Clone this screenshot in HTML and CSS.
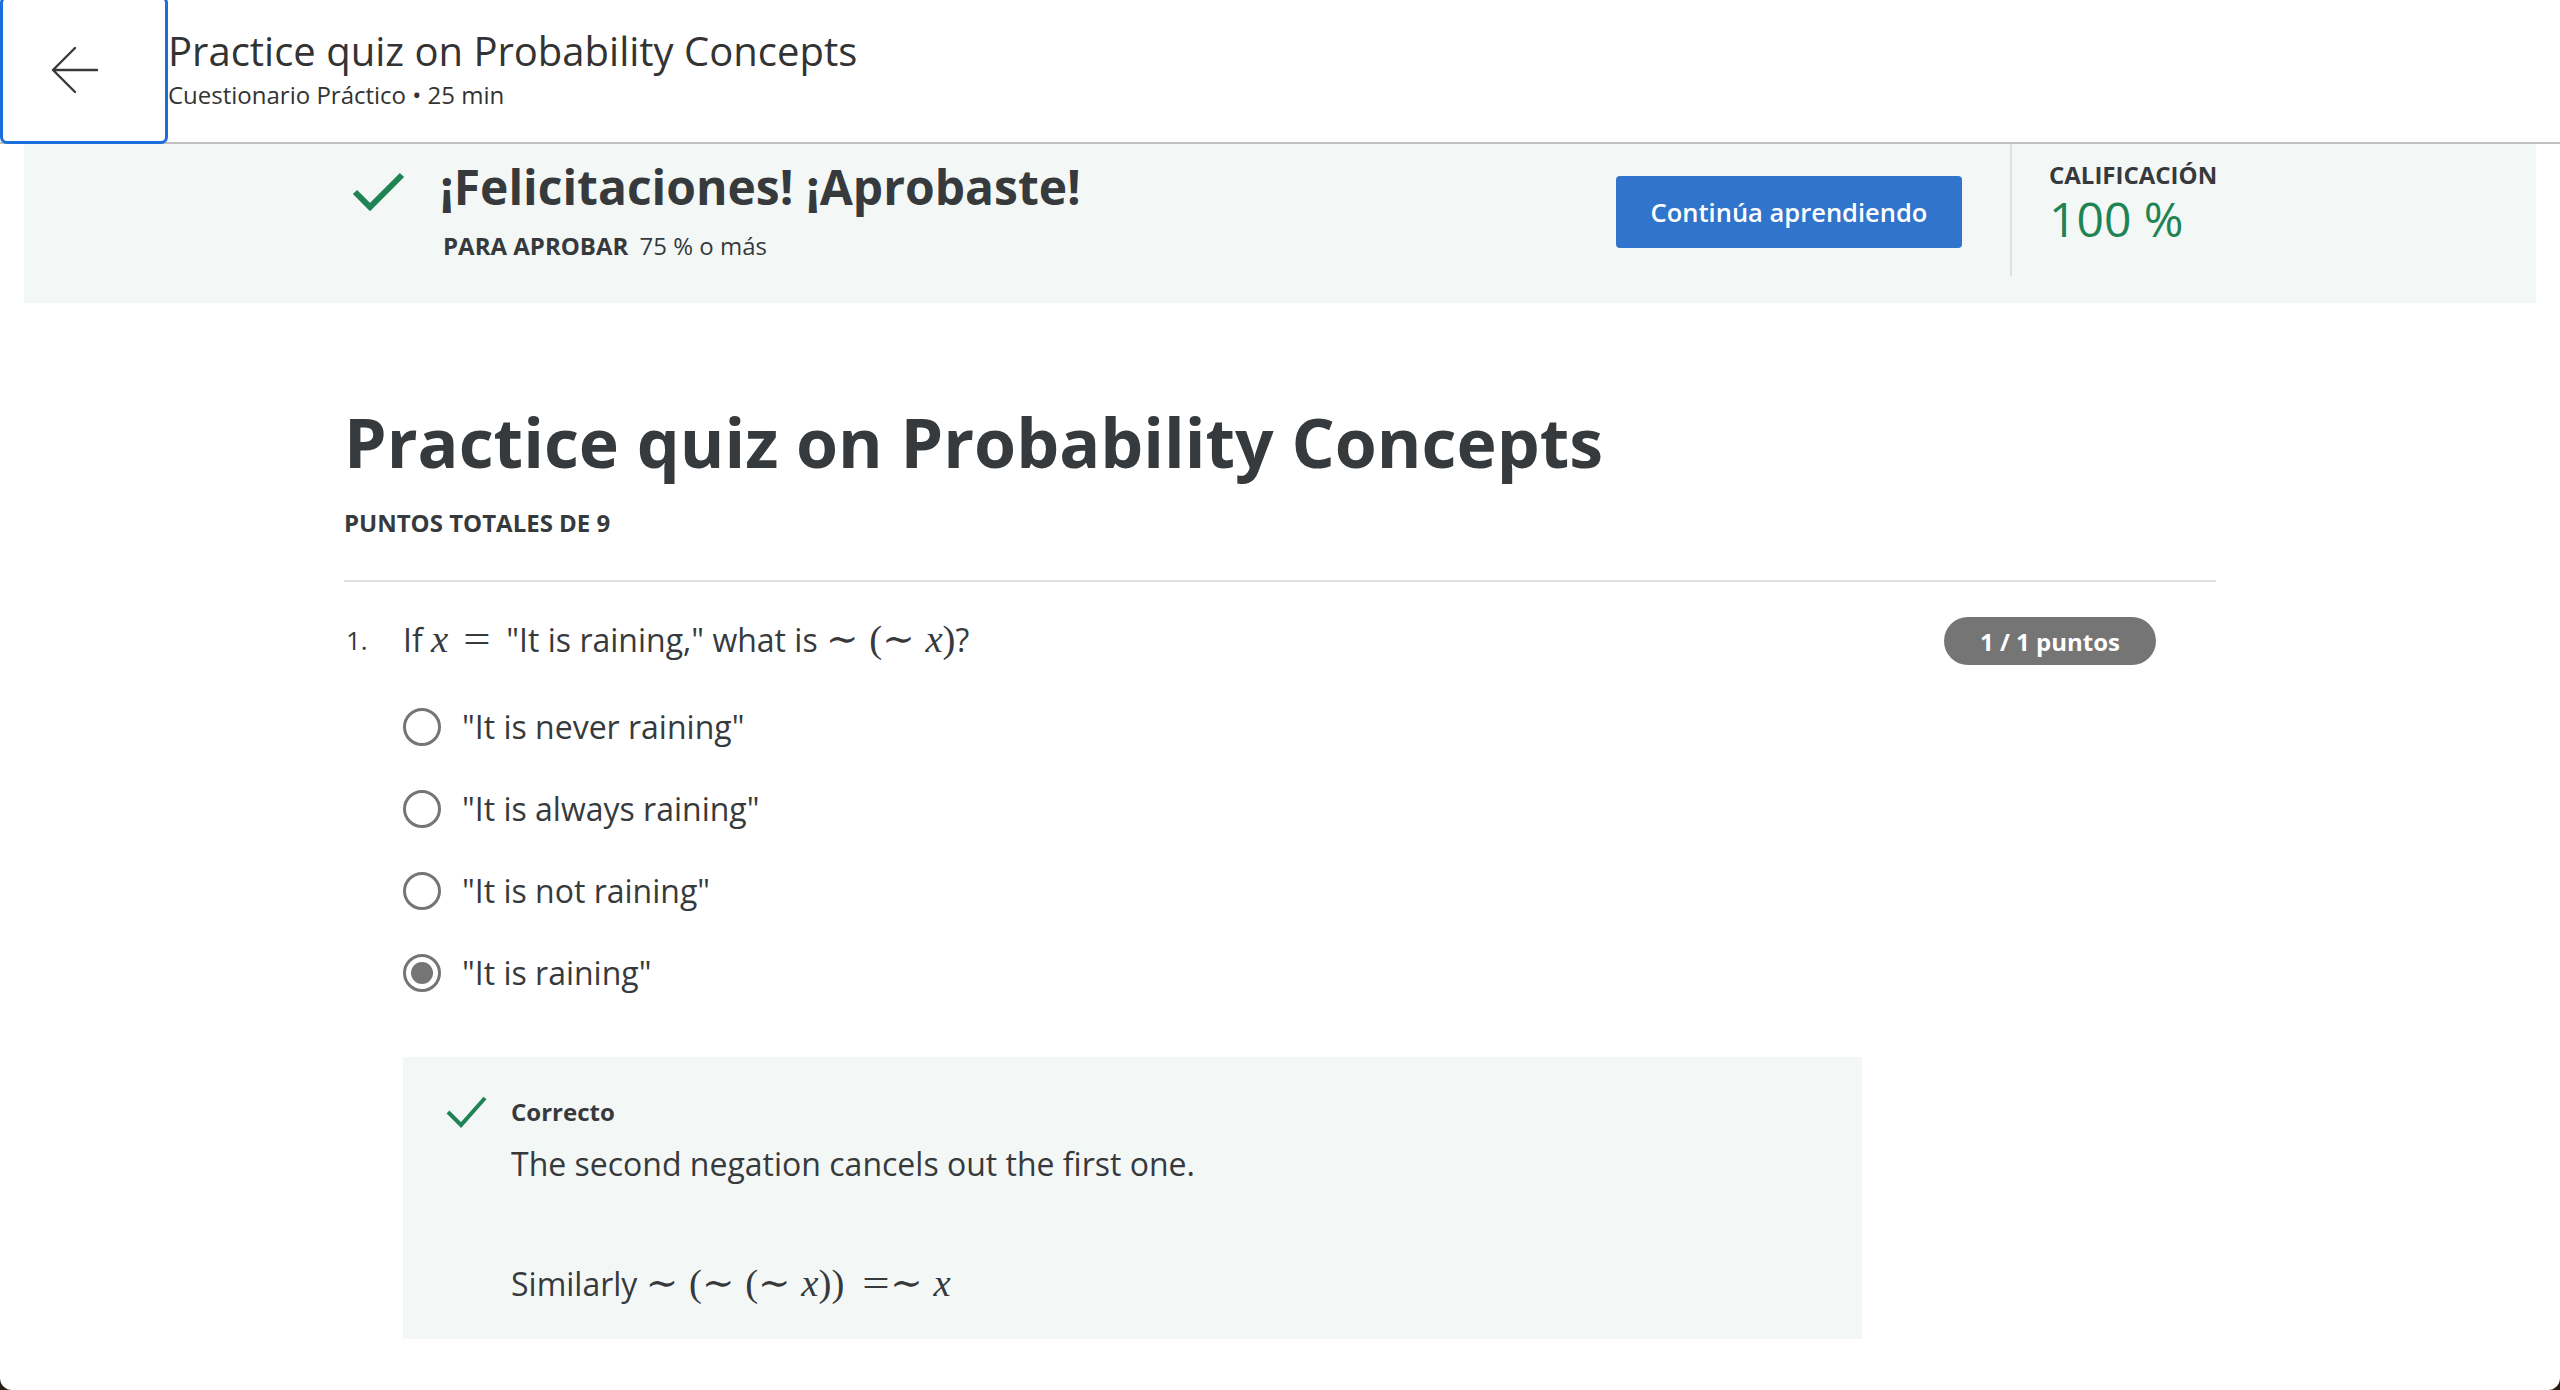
FILE: index.html
```html
<!DOCTYPE html>
<html lang="es">
<head>
<meta charset="utf-8">
<title>Practice quiz on Probability Concepts</title>
<link rel="stylesheet" href="styles.css">
</head>
<body>
<header class="topbar">
  <button class="back" aria-label="Volver">
    <svg width="48" height="48" viewBox="0 0 48 48"><path d="M46 24H2M24 2L2 24L24 46" fill="none" stroke="#373a3c" stroke-width="2.4" stroke-linecap="round" stroke-linejoin="round"/></svg>
  </button>
  <div class="topbar-text">
    <div class="topbar-title">Practice quiz on Probability Concepts</div>
    <div class="topbar-sub">Cuestionario Práctico • 25 min</div>
  </div>
</header>

<section class="banner">
  <div class="banner-inner">
    <svg class="banner-check" width="56" height="44" viewBox="0 0 56 44"><path d="M5 22L20 37L52 5" fill="none" stroke="#1f8354" stroke-width="6"/></svg>
    <div class="banner-text">
      <h2 class="banner-title">¡Felicitaciones! ¡Aprobaste!</h2>
      <p class="banner-pass"><strong>PARA APROBAR</strong> 75 % o más</p>
    </div>
    <button class="cta">Continúa aprendiendo</button>
    <div class="grade">
      <div class="grade-label">CALIFICACIÓN</div>
      <div class="grade-value">100 %</div>
    </div>
  </div>
</section>

<main class="content">
  <h1 class="quiz-title">Practice quiz on Probability Concepts</h1>
  <div class="total">PUNTOS TOTALES DE 9</div>
  <hr class="rule">
  <div class="question">
    <div class="qnum">1.</div>
    <div class="qbody">
      <div class="qhead">
        <div class="qtext">If <span class="m"><i>x</i><span class="rel">=</span></span> "It is raining," what is <span class="m"><span class="op">∼</span>(<span class="op op-tight">∼</span><i>x</i>)</span>?</div>
        <div class="pill">1 / 1 puntos</div>
      </div>
      <ul class="options">
        <li class="option"><span class="radio"></span><span class="opt-text">"It is never raining"</span></li>
        <li class="option"><span class="radio"></span><span class="opt-text">"It is always raining"</span></li>
        <li class="option"><span class="radio"></span><span class="opt-text">"It is not raining"</span></li>
        <li class="option"><span class="radio radio-on"></span><span class="opt-text">"It is raining"</span></li>
      </ul>
      <div class="feedback">
        <div class="fb-head">
          <svg class="fb-check" width="44" height="36" viewBox="0 0 44 36"><path d="M4 18L17 31L41 4" fill="none" stroke="#1f8354" stroke-width="4"/></svg>
          <span class="fb-label">Correcto</span>
        </div>
        <p class="fb-text">The second negation cancels out the first one.</p>
        <p class="fb-text fb-math">Similarly <span class="m"><span class="op">∼</span>(<span class="op op-tight">∼</span>(<span class="op op-tight">∼</span><i>x</i>))<span class="rel rel-wide">=</span><span class="op op-tight">∼</span><i>x</i></span></p>
      </div>
    </div>
  </div>
</main>
</body>
</html>
```
FILE: styles.css
```css
* { box-sizing: border-box; }

html { background: #2a1c14; }

body {
  margin: 0;
  height: 1390px;
  overflow: hidden;
  background: #fff;
  border-radius: 0 0 12px 12px;
  font-family: "Open Sans", "Noto Sans", sans-serif;
  color: #373a3c;
}

/* top bar */
.topbar {
  display: flex;
  align-items: flex-start;
  height: 144px;
  border-bottom: 2px solid #c1c1c1;
}

.back {
  flex: none;
  width: 168px;
  height: 148px;
  margin-top: -4px;
  border: 3px solid #1b6fdc;
  border-radius: 7px;
  background: #fff;
  display: flex;
  align-items: center;
  padding: 0 0 0 48px;
  position: relative;
  z-index: 1;
}

.back svg { display: block; }

.topbar-text { padding-top: 25px; }

.topbar-title {
  font-size: 40px;
  line-height: 52px;
  color: #333;
}

.topbar-sub {
  margin-top: 2px;
  font-size: 24px;
  line-height: 32px;
  color: #333;
}

/* banner */
.banner {
  margin: 0 24px;
  height: 159px;
  background: #f3f8f7;
}

.banner-inner {
  width: 1872px;
  margin: 0 auto;
  height: 100%;
  display: flex;
  align-items: flex-start;
}

.banner-check {
  flex: none;
  margin-left: 6px;
  margin-top: 26px;
}

.banner-text {
  margin-left: 34px;
  padding-top: 15px;
}

.banner-title {
  margin: 0;
  font-size: 48px;
  line-height: 56px;
  font-weight: 700;
}

.banner-pass {
  margin: 15px 0 0 3px;
  font-size: 24px;
  line-height: 32px;
}

.banner-pass strong { font-weight: 700; margin-right: 5px; }

.cta {
  margin-left: auto;
  margin-top: 32px;
  width: 346px;
  height: 72px;
  background: #3074cb;
  color: #fff;
  border: none;
  border-radius: 4px;
  font-family: "Open Sans", sans-serif;
  font-size: 25.5px;
  font-weight: 600;
}

.grade {
  margin-left: 48px;
  width: 206px;
  height: 132px;
  border-left: 2px solid #dedede;
  padding: 15px 0 0 37px;
}

.grade-label {
  font-size: 24px;
  line-height: 32px;
  font-weight: 700;
}

.grade-value {
  font-size: 48px;
  line-height: 56px;
  color: #1f8354;
}

/* content */
.content {
  width: 1872px;
  margin: 0 auto;
  padding-top: 97px;
}

.quiz-title {
  margin: 0;
  font-size: 68px;
  line-height: 84px;
  font-weight: 700;
}

.total {
  margin-top: 23px;
  font-size: 24px;
  line-height: 32px;
  font-weight: 700;
}

.rule {
  margin: 41px 0 0;
  border: 0;
  height: 2px;
  background: #e1e1e1;
}

.question {
  display: flex;
  margin-top: 36px;
}

.qnum {
  flex: none;
  width: 59px;
  padding-left: 2px;
  font-size: 26px;
  line-height: 44px;
}

.qbody { flex: 1; }

.qhead {
  display: flex;
  justify-content: space-between;
  align-items: flex-start;
  padding-right: 60px;
}

.qtext {
  font-size: 32px;
  line-height: 44px;
  height: 44px;
}

.m {
  font-family: "Liberation Serif", "DejaVu Serif", serif;
  font-size: 1.21em;
  line-height: 1;
}

.m i { font-style: italic; }

.rel {
  display: inline-block;
  transform: scaleX(1.25);
  margin: 0 10px 0 18px;
}

.rel-wide { margin: 0 3px 0 21px; }

.op { margin-right: 0.28em; }
.op-tight { margin-right: 0.28em; }

.pill {
  flex: none;
  width: 212px;
  height: 48px;
  margin-top: -1px;
  border-radius: 24px;
  background: #757575;
  color: #fff;
  font-size: 24px;
  font-weight: 700;
  display: flex;
  align-items: center;
  justify-content: center;
}

.options {
  list-style: none;
  margin: 21px 0 0;
  padding: 0;
}

.option {
  display: flex;
  align-items: center;
  height: 82px;
}

.radio {
  flex: none;
  width: 38px;
  height: 38px;
  border: 3px solid #757575;
  border-radius: 50%;
  margin-right: 21px;
  display: flex;
  align-items: center;
  justify-content: center;
}

.radio-on::after {
  content: "";
  width: 22px;
  height: 22px;
  border-radius: 50%;
  background: #757575;
}

.opt-text {
  font-size: 32px;
  line-height: 44px;
}

.feedback {
  margin-top: 43px;
  width: 1459px;
  background: #f3f8f7;
  padding: 37px 0 33px 41px;
}

.fb-head {
  display: flex;
  align-items: flex-start;
}

.fb-check { flex: none; }

.fb-label {
  margin-left: 23px;
  margin-top: 3px;
  font-size: 24px;
  line-height: 30px;
  font-weight: 700;
}

.fb-text {
  margin: 12px 0 0 67px;
  font-size: 32px;
  line-height: 44px;
}

.fb-math { margin-top: 76px; }
```
